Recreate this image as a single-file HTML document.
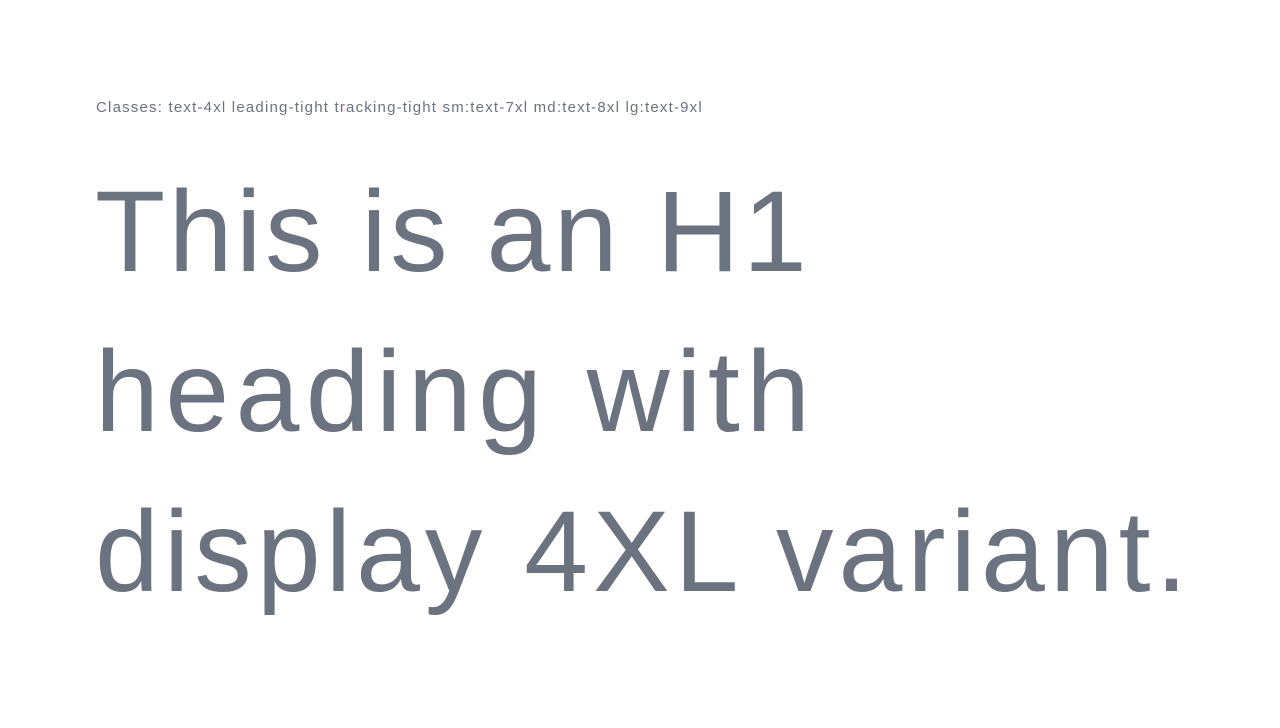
<!DOCTYPE html>
<html><head><meta charset="utf-8"><style>
html,body{margin:0;padding:0;background:#fff;width:1280px;height:728px;overflow:hidden}
.c{position:absolute;left:96px;top:98px;font:400 15px/20px "Liberation Sans",sans-serif;color:#6b7280;letter-spacing:1.2px;white-space:nowrap}
h1{position:absolute;left:95px;top:152px;margin:0;font:400 115px/160px "Liberation Sans",sans-serif;color:#6b7280;white-space:nowrap}
h1 span{display:block}
</style></head><body>
<div class="c">Classes: text-4xl leading-tight tracking-tight sm:text-7xl md:text-8xl lg:text-9xl</div>
<h1><span style="letter-spacing:3.4px">This is an H1</span><span style="letter-spacing:6.3px">heading with</span><span style="letter-spacing:4.9px">display 4XL variant.</span></h1>
</body></html>
